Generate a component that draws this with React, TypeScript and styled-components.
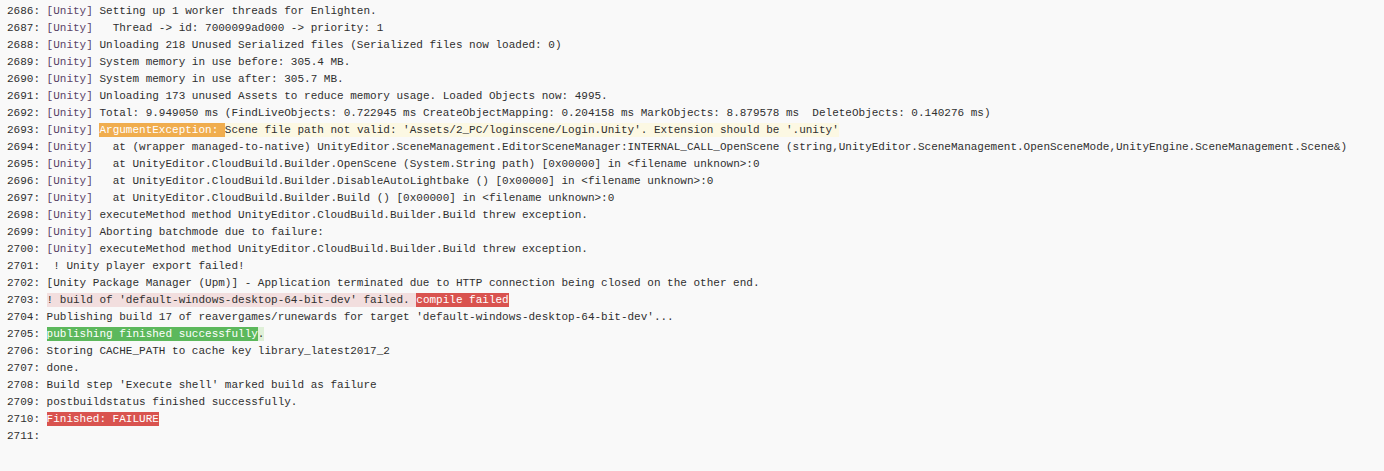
import React from "react";
import styled, { createGlobalStyle } from "styled-components";

const Global = createGlobalStyle`
  html, body { margin: 0; padding: 0; background: #f9f9f9; }
  body { font-family: "Liberation Mono", "DejaVu Sans Mono", monospace; }
`;

const Log = styled.div`
  padding: 3px 7px 20px 7px;
  background: #f9f9f9;
  min-height: 471px;
  box-sizing: border-box;
  font-family: "Liberation Mono", "DejaVu Sans Mono", monospace;
  font-size: 11px;
  line-height: 17px;
  color: #2f2f2f;
`;

const Line = styled.div`
  display: flex;
  white-space: pre;
  height: 17px;
`;

const LineNo = styled.span`
  color: #2f2f2f;
`;

const Content = styled.span``;

type Kind = "plain" | "tag" | "warnBadge" | "warnText" | "dangerText" | "dangerBadge" | "okBadge" | "okText";

const Seg = styled.span<{ $kind: Kind }>`
  ${({ $kind }) => {
    switch ($kind) {
      case "tag":
        return "color: #5a4368;";
      case "warnBadge":
        return "background: #f0ad4e; color: #ffffff; padding: 1px 0;";
      case "warnText":
        return "background: #fcf8e3; padding: 1px 0;";
      case "dangerText":
        return "background: #f2dede; padding: 1px 0;";
      case "dangerBadge":
        return "background: #d9534f; color: #ffffff; padding: 1px 0;";
      case "okBadge":
        return "background: #5cb85c; color: #ffffff; padding: 1px 0;";
      case "okText":
        return "background: #dff0d8; padding: 1px 0;";
      default:
        return "";
    }
  }}
`;

type Part = [Kind, string];

const U: Part = ["tag", "[Unity]"];

const lines: Part[][] = [
  [U, ["plain", " Setting up 1 worker threads for Enlighten."]],
  [U, ["plain", "   Thread -> id: 7000099ad000 -> priority: 1"]],
  [U, ["plain", " Unloading 218 Unused Serialized files (Serialized files now loaded: 0)"]],
  [U, ["plain", " System memory in use before: 305.4 MB."]],
  [U, ["plain", " System memory in use after: 305.7 MB."]],
  [U, ["plain", " Unloading 173 unused Assets to reduce memory usage. Loaded Objects now: 4995."]],
  [U, ["plain", " Total: 9.949050 ms (FindLiveObjects: 0.722945 ms CreateObjectMapping: 0.204158 ms MarkObjects: 8.879578 ms  DeleteObjects: 0.140276 ms)"]],
  [
    U,
    ["plain", " "],
    ["warnBadge", "ArgumentException: "],
    ["warnText", "Scene file path not valid: 'Assets/2_PC/loginscene/Login.Unity'. Extension should be '.unity'"],
  ],
  [U, ["plain", "   at (wrapper managed-to-native) UnityEditor.SceneManagement.EditorSceneManager:INTERNAL_CALL_OpenScene (string,UnityEditor.SceneManagement.OpenSceneMode,UnityEngine.SceneManagement.Scene&)"]],
  [U, ["plain", "   at UnityEditor.CloudBuild.Builder.OpenScene (System.String path) [0x00000] in <filename unknown>:0"]],
  [U, ["plain", "   at UnityEditor.CloudBuild.Builder.DisableAutoLightbake () [0x00000] in <filename unknown>:0"]],
  [U, ["plain", "   at UnityEditor.CloudBuild.Builder.Build () [0x00000] in <filename unknown>:0"]],
  [U, ["plain", " executeMethod method UnityEditor.CloudBuild.Builder.Build threw exception."]],
  [U, ["plain", " Aborting batchmode due to failure:"]],
  [U, ["plain", " executeMethod method UnityEditor.CloudBuild.Builder.Build threw exception."]],
  [["plain", " ! Unity player export failed!"]],
  [["plain", "[Unity Package Manager (Upm)] - Application terminated due to HTTP connection being closed on the other end."]],
  [
    ["dangerText", "! build of 'default-windows-desktop-64-bit-dev' failed. "],
    ["dangerBadge", "compile failed"],
  ],
  [["plain", "Publishing build 17 of reavergames/runewards for target 'default-windows-desktop-64-bit-dev'..."]],
  [
    ["okBadge", "publishing finished successfully"],
    ["okText", "."],
  ],
  [["plain", "Storing CACHE_PATH to cache key library_latest2017_2"]],
  [["plain", "done."]],
  [["plain", "Build step 'Execute shell' marked build as failure"]],
  [["plain", "postbuildstatus finished successfully."]],
  [["dangerBadge", "Finished: FAILURE"]],
  [],
];

export default function App() {
  return (
    <>
      <Global />
      <Log>
        {lines.map((parts, i) => (
          <Line key={i}>
            <LineNo>{`${2686 + i}: `}</LineNo>
            <Content>
              {parts.map(([kind, text], j) => (
                <Seg key={j} $kind={kind}>
                  {text}
                </Seg>
              ))}
            </Content>
          </Line>
        ))}
      </Log>
    </>
  );
}
